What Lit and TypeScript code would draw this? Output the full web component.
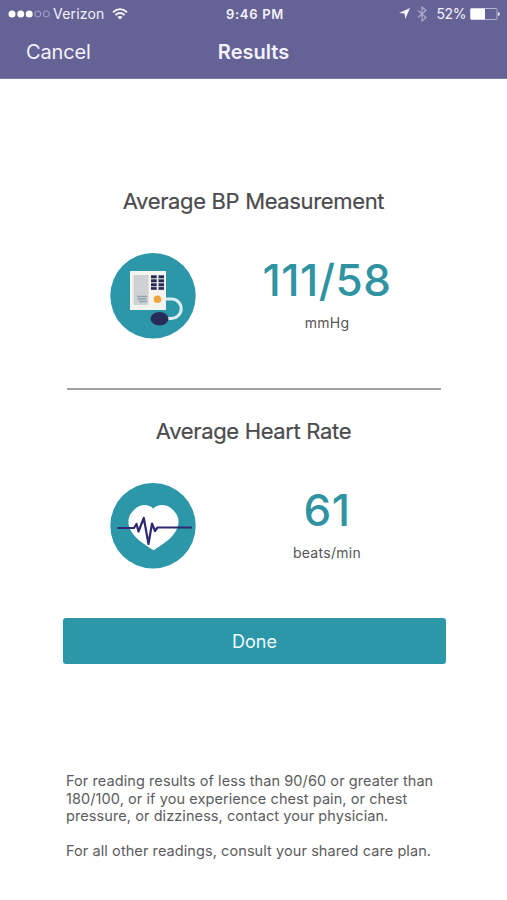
import { LitElement, html, css, svg } from "lit";
import { customElement, property } from "lit/decorators.js";

const monitorIcon = svg`
  <circle cx="43" cy="42.800" r="42.700" fill="#2b97a9"/>
  <path d="M56 46H61.500a9.700 9.700 0 0 1 0 19.400H57" fill="none" stroke="#dceef0" stroke-width="3"/>
  <rect x="20" y="18" width="36" height="39" fill="#f4f3ee"/>
  <rect x="23.500" y="22" width="15" height="30" fill="#cfd1d4"/>
  <path d="M27 43.500h10M27.500 46h9M29 48.500h8" stroke="#8aa7ad" stroke-width="1.300"/>
  <g fill="#262a55">
    <rect x="41" y="22.300" width="5.700" height="3"/><rect x="48.500" y="22.300" width="5.500" height="3"/>
    <rect x="41" y="26.300" width="5.700" height="3"/><rect x="48.500" y="26.300" width="5.500" height="3"/>
    <rect x="41" y="30.300" width="5.700" height="3"/><rect x="48.500" y="30.300" width="5.500" height="3"/>
    <rect x="41" y="34.100" width="5.700" height="2.700"/><rect x="48.500" y="34.100" width="5.500" height="2.700"/>
  </g>
  <circle cx="47.500" cy="46.200" r="3.800" fill="#eda63f"/>
  <ellipse cx="49.500" cy="65.700" rx="9" ry="6.700" fill="#262d59"/>`;

const heartIcon = svg`
  <circle cx="43" cy="42.800" r="42.700" fill="#2b97a9"/>
  <path d="M43.200 25.800C39 20.500 30 21 25 26C18.500 31.500 17 38 19.500 45C23.500 54.500 33 60.500 43.500 67.200C54 60.500 63.500 54.500 67.300 45C70 38 68.500 31.500 62 26C57 21 47.500 20.500 43.200 25.800Z" fill="#fff"/>
  <path d="M7.500 45H24L26.500 41L28.500 48.500L33.800 35L38.500 61L42 40.500L45 48L47.500 44.500H82" fill="none" stroke="#2f2a70" stroke-width="2.200" stroke-linejoin="round"/>`;

@customElement("reading-row")
export class ReadingRow extends LitElement {
  @property() heading = "";
  @property() value = "";
  @property() unit = "";
  @property() icon = "";

  static styles = css`
    :host { display: block; }
    h2 { margin: 0; font-size: 22px; font-weight: 400; line-height: 28px; text-align: center; color: #4b4b4d; letter-spacing: -0.350px; -webkit-text-stroke: 0.200px #4b4b4d; }
    .body { display: flex; margin-top: 38px; height: 86px; padding-left: 110px; }
    svg { width: 86px; height: 86px; flex: none; }
    .figures { width: 200px; margin-left: 31px; text-align: center; }
    .value { padding-top: 1px; font-size: 44px; font-weight: 500; line-height: 52px; color: #2f93a2; letter-spacing: 0.500px; }
    .unit { margin-top: 8px; font-size: 14px; line-height: 18px; color: #555557; letter-spacing: 0.300px; }
  `;

  render() {
    return html`
      <h2>${this.heading}</h2>
      <div class="body">
        <svg viewBox="0 0 86 86">${this.icon === "heart" ? heartIcon : monitorIcon}</svg>
        <div class="figures">
          <div class="value">${this.value}</div>
          <div class="unit">${this.unit}</div>
        </div>
      </div>`;
  }
}

@customElement("app-root")
export class AppRoot extends LitElement {
  static styles = css`
    :host { display: flex; flex-direction: column; height: 900px; overflow: hidden; background: #fff; font-family: Inter, "Liberation Sans", sans-serif; }
    header { height: 79px; flex: none; box-sizing: border-box; background: #656296; border-bottom: 1px solid #7d7aa8; color: #f4f2fb; }
    .status, .nav { display: grid; grid-template-columns: 1fr auto 1fr; align-items: center; }
    .status { height: 27px; padding: 0 7px 0 8px; font-size: 14px; }
    .side { display: flex; align-items: center; }
    .end { justify-content: flex-end; }
    .dots { width: 42px; height: 10px; }
    .carrier { margin-left: 3px; letter-spacing: 0.200px; }
    .wifi { width: 16px; height: 12px; margin-left: 7px; }
    .time { font-weight: 600; font-size: 13px; letter-spacing: 0.700px; padding-left: 2px; }
    .arrow { width: 11px; height: 11px; }
    .bluetooth { width: 10px; height: 16px; margin-left: 7px; }
    .percent { margin-left: 9px; letter-spacing: -0.400px; }
    .battery { width: 30px; height: 12px; margin-left: 4px; }
    .nav { height: 50px; padding: 0 26px; font-size: 20px; letter-spacing: -0.150px; }
    .title { font-weight: 600; letter-spacing: 0; }
    .bp { margin-top: 108px; }
    .rule { height: 2px; margin: 49px 66px 0 67px; background: #a1a1a3; }
    .hr { margin-top: 27px; }
    .done { display: block; flex: none; height: 46px; margin: 49px 61px 0 63px; padding: 0; border: 0; border-radius: 3px; background: #2b97a9; color: #f0fbfc; font-family: inherit; font-size: 18px; }
    .notes { margin: 108px 60px 0 66px; font-size: 14.500px; line-height: 17.500px; color: #5c5c5e; letter-spacing: 0.080px; }
    .notes p { margin: 0 0 17px; }
    .notes span { display: block; white-space: nowrap; }
  `;

  render() {
    return html`
      <header>
        <div class="status">
          <div class="side">
            <svg class="dots" viewBox="0 0 42 10">
              <g fill="#fff"><circle cx="4" cy="5" r="3.500"/><circle cx="12.700" cy="5" r="3.500"/><circle cx="21.200" cy="5" r="3.500"/></g>
              <g fill="none" stroke="#aaa6ca"><circle cx="29.800" cy="5" r="3"/><circle cx="38.300" cy="5" r="3"/></g>
            </svg>
            <span class="carrier">Verizon</span>
            <svg class="wifi" viewBox="0 0 16 12" fill="none" stroke="#f6f4fc" stroke-width="1.800">
              <path d="M1 4.200Q8-1.900 15 4.200M3.400 7Q8 3.100 12.600 7"/>
              <path d="M8 11.600L5.400 8.900Q8 6.900 10.600 8.900Z" fill="#f6f4fc" stroke="none"/>
            </svg>
          </div>
          <span class="time">9:46 PM</span>
          <div class="side end">
            <svg class="arrow" viewBox="0 0 11 11"><path d="M11 0L6.300 11L5.500 5.500L0 5Z" fill="#f6f4fc"/></svg>
            <svg class="bluetooth" viewBox="0 0 10 16"><path d="M1 4.500L9 11.500L5 15V1L9 4.500L1 11.500" fill="none" stroke="#aeaace" stroke-width="1.200"/></svg>
            <span class="percent">52%</span>
            <svg class="battery" viewBox="0 0 30 12">
              <rect x="0.500" y="0.500" width="26.500" height="11" rx="1" fill="none" stroke="#b6b2d3"/>
              <rect x="0.500" y="0.500" width="14.500" height="11" rx="1" fill="#fff"/>
              <path d="M28 4Q30 4.500 30 6T28 8Z" fill="#e4e1f0"/>
            </svg>
          </div>
        </div>
        <div class="nav"><span>Cancel</span><span class="title">Results</span><span></span></div>
      </header>
      <reading-row class="bp" heading="Average BP Measurement" value="111/58" unit="mmHg" icon="monitor"></reading-row>
      <div class="rule"></div>
      <reading-row class="hr" heading="Average Heart Rate" value="61" unit="beats/min" icon="heart"></reading-row>
      <button class="done">Done</button>
      <div class="notes">
        <p><span>For reading results of less than 90/60 or greater than</span><span>180/100, or if you experience chest pain, or chest</span><span>pressure, or dizziness, contact your physician.</span></p>
        <p><span>For all other readings, consult your shared care plan.</span></p>
      </div>`;
  }
}
